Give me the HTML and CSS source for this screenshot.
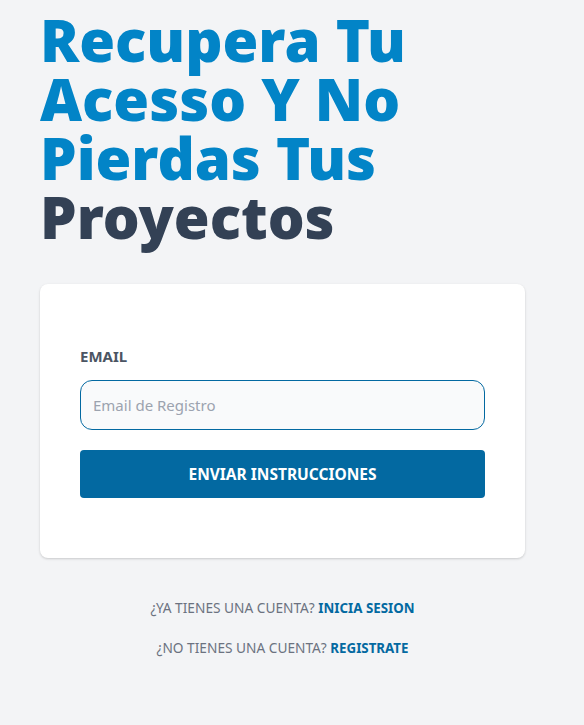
FILE: index.html
```html
<!DOCTYPE html>
<html lang="es">
<head>
<meta charset="utf-8">
<title>Olvide Password</title>
<link rel="stylesheet" href="styles.css">
</head>
<body>
<main class="page">
  <h1 class="title">Recupera Tu Acesso Y No Pierdas Tus <span class="title-dark">Proyectos</span></h1>
  <form class="card">
    <div class="field">
      <label class="label" for="email">Email</label>
      <input class="input" id="email" type="email" placeholder="Email de Registro">
    </div>
    <button class="btn" type="button">Enviar Instrucciones</button>
  </form>
  <nav class="links">
    <p class="link-row">¿Ya tienes una cuenta? <a class="link" href="#">Inicia Sesion</a></p>
    <p class="link-row">¿No tienes una cuenta? <a class="link" href="#">Registrate</a></p>
  </nav>
</main>
</body>
</html>
```
FILE: styles.css
```css
* { box-sizing: border-box; }
html, body { margin: 0; padding: 0; }
body {
  background: #f3f4f6;
  font-family: "Noto Sans", "Open Sans", sans-serif;
  color: #4b5563;
}
.page {
  padding: 10px 59px 40px 40px;
}
.title {
  margin: 0;
  font-family: "Noto Sans", sans-serif;
  font-weight: 900;
  font-size: 58px;
  line-height: 59px;
  color: #0284c7;
  width: 440px;
}
.title-dark { color: #334155; }
.card {
  margin-top: 38px;
  background: #fff;
  border-radius: 8px;
  box-shadow: 0 1px 3px rgba(0,0,0,0.12), 0 1px 2px rgba(0,0,0,0.06);
  padding: 62px 40px 60px;
  width: 485px;
}
.field { display: flex; flex-direction: column; }
.label {
  text-transform: uppercase;
  font-weight: 700;
  font-size: 15px;
  color: #4b5563;
  line-height: 20px;
}
.input {
  margin-top: 14px;
  width: 100%;
  height: 50px;
  border: 1px solid #0369a1;
  border-radius: 12px;
  background: #f9fafb;
  padding: 0 12px;
  font-family: inherit;
  font-size: 15px;
  color: #111827;
}
.input::placeholder { color: #9ca3af; }
.btn {
  margin-top: 20px;
  width: 100%;
  height: 48px;
  border: 0;
  border-radius: 4px;
  background: #0369a1;
  color: #fff;
  font-family: inherit;
  font-weight: 700;
  font-size: 15.5px;
  text-transform: uppercase;
}
.links {
  width: 485px;
  margin-top: 40px;
  display: flex;
  flex-direction: column;
  gap: 20px;
  align-items: center;
}
.link-row {
  margin: 0;
  text-transform: uppercase;
  font-size: 13.7px;
  line-height: 20px;
  color: #6b7280;
}
.link {
  font-size: 13.3px;
  color: #0369a1;
  font-weight: 700;
  text-decoration: none;
}
```
